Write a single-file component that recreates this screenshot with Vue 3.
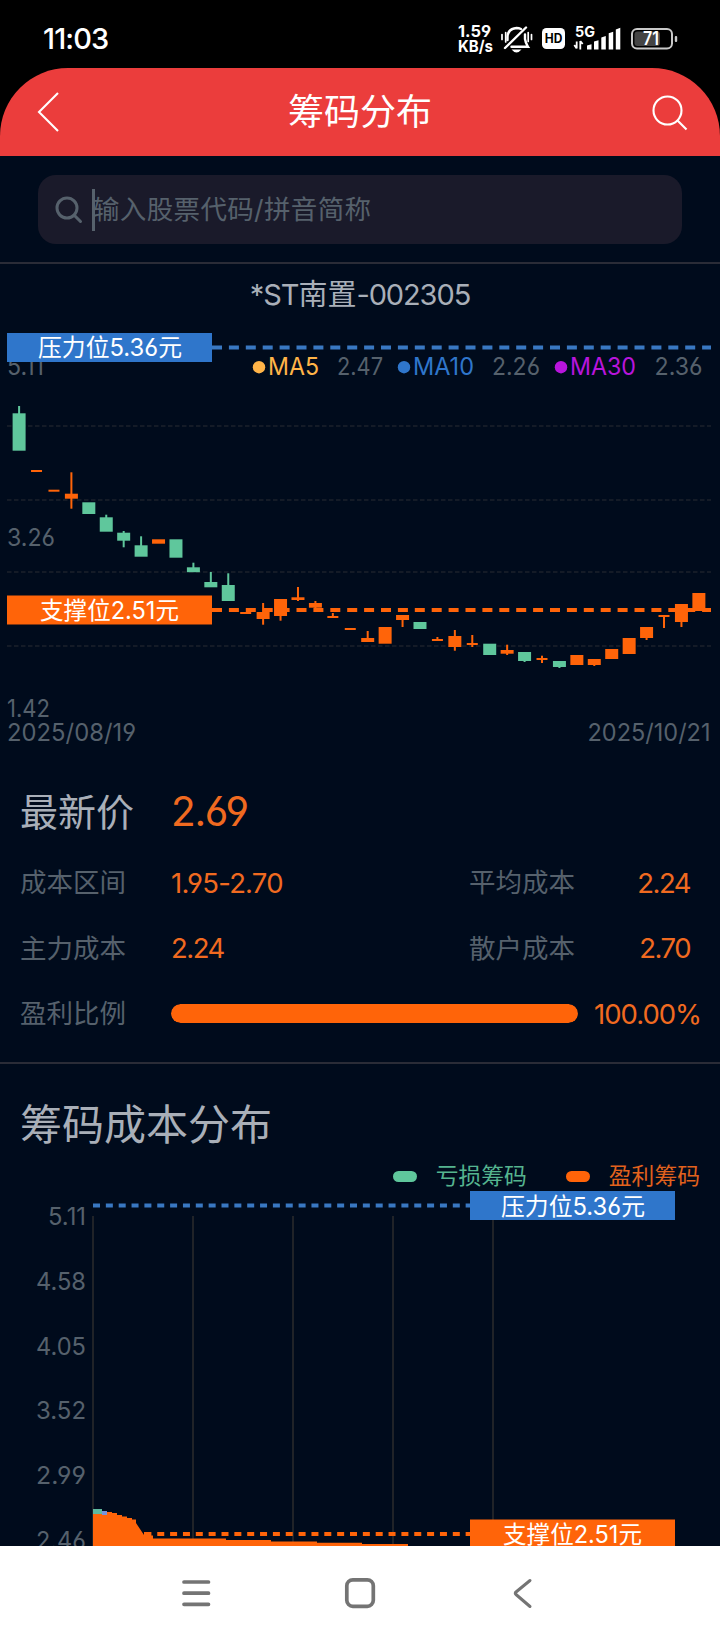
<template>
  <div class="phone">
    <!-- System status bar -->
    <div class="status-bar">
      <span class="clock">11:03</span>
      <svg class="status-icons" width="224" height="40" viewBox="456 18 224 40">
        <g class="net-speed">
          <text x="458" y="37" textLength="33" lengthAdjust="spacingAndGlyphs">1.59</text>
          <text x="458" y="51.5" textLength="35" lengthAdjust="spacingAndGlyphs">KB/s</text>
        </g>
        <!-- muted bell -->
        <g fill="none" stroke="#fff" stroke-width="2.4" stroke-linecap="round">
          <path d="M505 48 L526 27.5" />
          <path d="M507.5 40 V37 Q508 28.5 516.5 28 Q519 28 521 29" />
          <path d="M525 34.5 V39 Q525.5 43 528 46.8 H511.5" />
          <path d="M502 34.5 V39.5 M505.7 32.5 V42 M528.2 32.5 V41.5 M531.5 34.5 V39.5" stroke-width="1.7" />
        </g>
        <path d="M511.5 49.5 H521.5 Q516.5 55.5 511.5 49.5 Z" fill="#fff" />
        <rect x="542" y="28" width="23" height="21" rx="4.5" fill="#fff" />
        <text class="hd" x="544.7" y="43.2" textLength="17.6" lengthAdjust="spacingAndGlyphs">HD</text>
        <text class="five-g" x="575" y="37" textLength="20" lengthAdjust="spacingAndGlyphs">5G</text>
        <path d="M576.7 41.5 V48.5 M574.3 45 L576.7 48.5 M580.3 41 V49.5 M582.7 44 L580.3 41" stroke="#fff" stroke-width="1.8" fill="none" />
        <path
          d="M587 49.5 V45.5 L591.5 44.3 V49.5 Z M594 49.5 V41.5 L598.5 40.2 V49.5 Z M601.3 49.5 V37.5 L605.8 36 V49.5 Z M608.7 49.5 V33.3 L613.2 31.8 V49.5 Z M615.8 49.5 V29.5 L620.3 27.8 V49.5 Z"
          fill="#fff"
        />
        <rect x="632" y="29" width="40" height="19.5" rx="5" fill="#000" stroke="#c9c9c9" stroke-width="2" />
        <rect x="634.5" y="31.5" width="25.5" height="14.5" rx="3" fill="#444" />
        <rect x="674.8" y="36" width="2.4" height="6" rx="1" fill="#c9c9c9" />
        <text class="battery" x="643" y="44.8" textLength="16" lengthAdjust="spacingAndGlyphs">71</text>
      </svg>
    </div>

    <header class="title-bar">
      <svg class="back" width="24" height="42" viewBox="0 0 24 42">
        <path d="M21 2 L2 21 L21 40" />
      </svg>
      <h1>筹码分布</h1>
      <svg class="find" width="36" height="36" viewBox="0 0 36 36">
        <circle cx="15.5" cy="15.5" r="14" />
        <path d="M25 25 L34.5 34.5" />
      </svg>
    </header>

    <main class="page">
      <div class="search-wrap">
        <div class="search-box">
          <svg width="28" height="28" viewBox="0 0 28 28">
            <circle cx="12" cy="12" r="10" />
            <path d="M19 19 L25.5 25.5" />
          </svg>
          <i class="caret"></i>
          <span>输入股票代码/拼音简称</span>
        </div>
      </div>

      <!-- Daily candles with pressure and support levels -->
      <section class="kline">
        <h2>*ST<b>南置</b>-002305</h2>
        <svg class="chart" width="720" height="430" viewBox="0 326 720 430">
          <line v-for="y in gridY" :key="y" class="grid" x1="7" x2="711" :y1="y" :y2="y" />
          <g class="muted">
            <text x="7" y="375" textLength="37" lengthAdjust="spacingAndGlyphs">5.11</text>
            <text x="7" y="546" textLength="48" lengthAdjust="spacingAndGlyphs">3.26</text>
            <text x="7" y="717" textLength="43" lengthAdjust="spacingAndGlyphs">1.42</text>
            <text x="7" y="741" textLength="129" lengthAdjust="spacingAndGlyphs">2025/08/19</text>
            <text x="587.5" y="741" textLength="123" lengthAdjust="spacingAndGlyphs">2025/10/21</text>
          </g>
          <g v-for="m in averages" :key="m.name">
            <circle :cx="m.x" cy="367.2" r="6.2" :fill="m.color" />
            <text :x="m.x + 9" y="375" :textLength="m.nameW" lengthAdjust="spacingAndGlyphs" :fill="m.color">{{ m.name }}</text>
            <text class="muted" :x="m.valueX" y="375" :textLength="m.valueW" lengthAdjust="spacingAndGlyphs">{{ m.value }}</text>
          </g>
          <line class="level blue" x1="212" x2="711" y1="347.5" y2="347.5" />
          <line class="level orange" x1="212" x2="711" y1="610" y2="610" />
          <g v-for="(c, i) in candles" :key="i" :fill="c[0] ? '#5fc79c' : '#ff6409'">
            <rect :x="candleX(i) - 1" :y="c[3]" width="2" :height="c[4] - c[3]" />
            <rect :x="candleX(i) - bodyW(c) / 2" :y="c[1]" :width="bodyW(c)" :height="c[2] - c[1]" />
          </g>
          <rect x="7" y="333" width="205" height="29" fill="#2f76cb" />
          <text class="tag" x="38" y="356.3" textLength="144" lengthAdjust="spacingAndGlyphs">压力位5.36元</text>
          <rect x="7" y="595.5" width="205" height="29" fill="#ff6409" />
          <text class="tag" x="40" y="618.8" textLength="139" lengthAdjust="spacingAndGlyphs">支撑位2.51元</text>
        </svg>
      </section>

      <section class="summary">
        <div class="row latest">
          <span class="label">最新价</span>
          <span class="num">2.69</span>
        </div>
        <div v-for="r in rows" :key="r.left" class="row">
          <span class="label">{{ r.left }}</span>
          <span class="num">{{ r.leftValue }}</span>
          <span class="label">{{ r.right }}</span>
          <span class="num end">{{ r.rightValue }}</span>
        </div>
        <div class="row profit">
          <span class="label">盈利比例</span>
          <div class="track"><div class="fill" :style="{ width: profit + '%' }"></div></div>
          <span class="num">{{ profit.toFixed(2) }}%</span>
        </div>
      </section>

      <section class="chips">
        <h3>筹码成本分布</h3>
        <div class="legend">
          <i class="pill loss"></i><span class="loss-text">亏损筹码</span>
          <i class="pill gain"></i><span class="gain-text">盈利筹码</span>
        </div>
        <svg class="chart" width="720" height="356" viewBox="0 1190 720 356">
          <line v-for="x in [93, 193, 293, 393, 493]" :key="x" class="axis" :x1="x" :x2="x" y1="1216" y2="1546" />
          <text
            v-for="(p, i) in prices"
            :key="p"
            class="muted"
            :x="i ? 36 : 48"
            :y="1225 + i * 64.8"
            :textLength="i ? 50 : 38"
            lengthAdjust="spacingAndGlyphs"
          >{{ p }}</text>
          <line class="level short blue" x1="93" x2="470" y1="1205.5" y2="1205.5" />
          <line class="level short orange" x1="93" x2="470" y1="1534" y2="1534" />
          <path :d="area" fill="#ff6409" />
          <rect x="93" y="1509" width="9" height="5" fill="#5fb99f" />
          <rect x="102" y="1511" width="5" height="4" fill="#7a93d8" />
          <rect x="470" y="1191" width="205" height="29" fill="#2f76cb" />
          <text class="tag" x="501" y="1214.6" textLength="144" lengthAdjust="spacingAndGlyphs">压力位5.36元</text>
          <rect x="470" y="1519.5" width="205" height="29" fill="#ff6409" />
          <text class="tag" x="503" y="1542.5" textLength="139" lengthAdjust="spacingAndGlyphs">支撑位2.51元</text>
        </svg>
      </section>
    </main>

    <nav class="nav-bar">
      <svg width="720" height="94" viewBox="0 0 720 94">
        <path d="M184 36 H208.5 M184 47.2 H208.5 M184 58.3 H208.5" />
        <rect x="346.8" y="33.8" width="26.5" height="26.5" rx="6" />
        <path d="M530 34.5 L516 46 Q514.5 47.2 516 48.5 L530 60.5" stroke-width="3" />
      </svg>
    </nav>
  </div>
</template>

<script setup>
import { ref } from 'vue'

const profit = ref(100)
const gridY = [426, 500, 572, 646]

const averages = [
  { name: 'MA5', value: '2.47', x: 259, nameW: 51, valueX: 337, valueW: 46, color: '#ffb448' },
  { name: 'MA10', value: '2.26', x: 404, nameW: 61, valueX: 492, valueW: 48, color: '#2f76cb' },
  { name: 'MA30', value: '2.36', x: 561, nameW: 66, valueX: 654.5, valueW: 48, color: '#b815dc' }
]

const rows = [
  { left: '成本区间', leftValue: '1.95-2.70', right: '平均成本', rightValue: '2.24' },
  { left: '主力成本', leftValue: '2.24', right: '散户成本', rightValue: '2.70' }
]

const prices = ['5.11', '4.58', '4.05', '3.52', '2.99', '2.46']

// [falling, body top, body bottom, high, low]
const candles = [
  [1, 413.3, 450.7, 406, 450],
  [0, 470, 472, 470, 472],
  [0, 489.7, 491.7, 490, 491],
  [0, 493.7, 498.7, 472.3, 508.7],
  [1, 502.3, 514, 503, 513],
  [1, 517.3, 531.7, 514.7, 531],
  [1, 532.7, 540.7, 531, 547.3],
  [1, 545.3, 556.7, 536.3, 556],
  [0, 539.3, 543.7, 540, 543],
  [1, 539.3, 557.7, 540, 557],
  [1, 567.3, 572.2, 562.7, 572],
  [1, 582, 587.3, 572, 587],
  [1, 585, 601, 573.3, 600],
  [0, 612, 614, 612, 614],
  [0, 612, 619, 603, 624.7],
  [0, 599, 616, 599, 620.7],
  [0, 597.3, 600, 587, 601],
  [0, 603, 607.7, 601, 608],
  [0, 616, 618, 613, 618],
  [0, 628, 630, 628, 630],
  [0, 638, 642, 631, 642],
  [0, 627, 643.7, 627, 643],
  [0, 615, 620, 615, 627],
  [1, 622, 629, 622, 629],
  [0, 639, 641, 637, 641],
  [0, 636, 647, 630, 650.7],
  [0, 643, 645, 635, 647],
  [1, 643.7, 655, 644, 655],
  [0, 650, 653.7, 644.7, 655],
  [1, 652, 661, 652, 662],
  [0, 658, 660, 655.7, 663],
  [1, 661, 667, 661, 668],
  [0, 655, 665, 655, 665],
  [0, 659, 665, 659, 666],
  [0, 649, 659, 649, 659],
  [0, 638, 654, 638, 654],
  [0, 627, 638, 627, 640],
  [0, 615, 617, 615, 628],
  [0, 604, 622, 604, 627],
  [0, 593, 611, 593, 611]
]

const candleX = (i) => 19.1 + i * 17.43
const bodyW = (c) => (c[2] - c[1] <= 2.1 ? 11 : 13)

const area =
  'M93 1546 V1514 H107 V1512 H112 V1513 H117 V1515 H122 V1516.5 H127 V1518 H132 V1519.5 H136 V1523 ' +
  'L144 1535 V1532 H148 V1535.5 H153 V1538.5 H226 V1540 H271 V1541.5 H317 V1542.7 H362 V1544 H408 V1546 Z'
</script>

<style>
body {
  background: #000b1c;
}
</style>

<style scoped>
.phone {
  width: 720px;
  height: 1640px;
  display: flex;
  flex-direction: column;
  overflow: hidden;
  background: #000;
  font-family: Inter, "Noto Sans CJK SC", sans-serif;
  font-feature-settings: "cv03", "cv04";
}

h1,
h2,
h3 {
  margin: 0;
  font-weight: 400;
}

svg {
  display: block;
  flex: none;
}

.status-bar {
  height: 68px;
  flex: none;
  display: flex;
  justify-content: space-between;
  padding: 18px 40px 0 43px;
  box-sizing: border-box;
  color: #fff;
}

.clock {
  font-size: 29px;
  line-height: 42px;
  font-weight: 500;
  letter-spacing: -0.9px;
}

.status-icons text {
  font-size: 16.5px;
  font-weight: 700;
  fill: #fff;
}

.status-icons .hd {
  font-size: 12.5px;
  fill: #000;
}

.status-icons .five-g {
  font-size: 14.5px;
}

.status-icons .battery {
  font-size: 18px;
  font-weight: 600;
}

.title-bar {
  height: 88px;
  flex: none;
  display: flex;
  align-items: center;
  justify-content: space-between;
  padding: 0 32px 0 37px;
  box-sizing: border-box;
  border-radius: 68px 68px 0 0;
  background: #eb3d3c;
  color: #fff;
}

.title-bar svg {
  fill: none;
  stroke: #fff;
  stroke-width: 2.1;
}

.title-bar h1 {
  font-size: 36px;
  line-height: 52px;
  margin: 0 0 1px 7px;
}

.find {
  margin-top: 2px;
}

.page {
  height: 1390px;
  flex: none;
  display: flex;
  flex-direction: column;
  overflow: hidden;
  background: #000b1c;
}

.search-wrap {
  height: 108px;
  flex: none;
  padding: 19px 38px 0;
  box-sizing: border-box;
  border-bottom: 2px solid #2a2c37;
}

.search-box {
  height: 69px;
  display: flex;
  align-items: center;
  padding-left: 17px;
  border-radius: 18px;
  background: #1a1a2a;
  color: #56616c;
  font-size: 26.5px;
}

.search-box svg {
  fill: none;
  stroke: #56616c;
  stroke-width: 3;
  stroke-linecap: round;
}

.caret {
  width: 3px;
  height: 42px;
  margin-left: 9px;
  background: #56616c;
}

.search-box span {
  margin: 0 0 4px -2px;
  letter-spacing: 0.35px;
}

.kline {
  height: 496px;
  flex: none;
}

.kline h2 {
  height: 62px;
  line-height: 62px;
  text-align: center;
  font-size: 29px;
  letter-spacing: -1.1px;
  color: #a9afb8;
}

.kline b {
  font-weight: 400;
  letter-spacing: 0;
}

.chart text {
  font-size: 24.5px;
}

.chart .muted,
.chart .muted text {
  fill: #56616c;
}

.chart .tag {
  font-size: 24px;
  fill: #fff;
}

.grid {
  stroke: #141b27;
  stroke-width: 2;
  stroke-dasharray: 4.5 2.5;
}

.axis {
  stroke: #202328;
  stroke-width: 2;
}

.level {
  stroke-width: 4;
  stroke-dasharray: 10 6.9;
}

.level.short {
  stroke-dasharray: 7 5.85;
}

.blue {
  stroke: #3978c2;
}

.orange {
  stroke: #ff6409;
}

.summary {
  height: 304px;
  flex: none;
  padding: 12px 19px 0 20px;
  box-sizing: border-box;
  border-bottom: 2px solid #2a2c37;
}

.row {
  height: 65.5px;
  display: grid;
  grid-template-columns: 151px 298px 120px 101px;
  align-items: center;
}

.label {
  padding-bottom: 4px;
  font-size: 26.5px;
  white-space: nowrap;
  color: #56616c;
}

.num {
  font-size: 27.5px;
  letter-spacing: -1.5px;
  white-space: nowrap;
  color: #f06a20;
}

.row:nth-child(2) .num:nth-child(2) {
  letter-spacing: -0.8px;
}

.end {
  text-align: right;
}

.latest {
  height: 78px;
}

.latest .label {
  font-size: 38px;
  color: #a9afb8;
}

.latest .num {
  font-size: 40.5px;
  letter-spacing: -1.3px;
}

.profit {
  grid-template-columns: 151px 407px 16px auto;
}

.profit .num {
  grid-column: 4;
  letter-spacing: -1px;
}

.track {
  height: 19px;
  border-radius: 10px;
  overflow: hidden;
  background: #1a1a2a;
}

.fill {
  height: 100%;
  border-radius: 10px;
  background: #ff6409;
}

.chips h3 {
  height: 98px;
  padding: 31px 0 0 20px;
  box-sizing: border-box;
  font-size: 42px;
  line-height: 60px;
  color: #a9afb8;
}

.legend {
  height: 28px;
  display: flex;
  align-items: center;
  justify-content: flex-end;
  padding-right: 20px;
  font-size: 22.8px;
}

.legend span {
  padding-bottom: 3px;
}

.pill {
  width: 24px;
  height: 11px;
  margin-right: 19px;
  border-radius: 6px;
}

.pill.loss {
  background: #5fc79c;
}

.pill.gain {
  margin-left: 39px;
  background: #ff6409;
}

.loss-text {
  color: #55b48f;
}

.gain-text {
  color: #e2621d;
}

.nav-bar {
  height: 94px;
  flex: none;
  background: #fff;
}

.nav-bar svg {
  fill: none;
  stroke: #747474;
  stroke-width: 3.7;
  stroke-linecap: round;
}
</style>
